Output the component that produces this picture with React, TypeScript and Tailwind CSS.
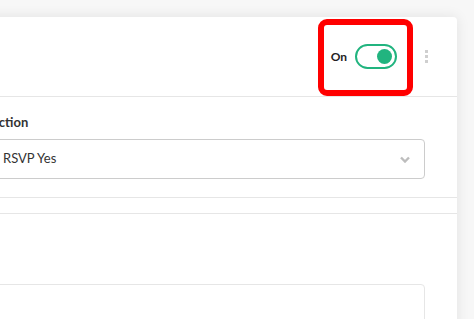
import React from "react";

export default function App() {
  return (
    <div className="min-h-[319px] h-[319px] overflow-hidden bg-[#f7f7f7] pt-[17px] pr-[17px] font-['Lato','Noto_Sans',sans-serif] relative">
      <div className="ml-[-34px] h-[400px] bg-white rounded-tr-[4px] shadow-[0_0_14px_rgba(0,0,0,0.09)]">
        {/* Header */}
        <div className="h-[80px] flex items-center justify-end pr-[29px] border-b border-[#e6e6e6]">
          <span className="text-[12px] font-bold text-[#222] mr-[8px]">On</span>
          <button
            type="button"
            className="w-[42px] h-[25px] rounded-full border-2 border-[#21b47f] bg-white flex items-center justify-end pr-[3px]"
          >
            <span className="w-[15px] h-[15px] rounded-full bg-[#21b47f]" />
          </button>
          <div className="ml-[28px] flex flex-col gap-[2px]">
            <span className="w-[3px] h-[3px] bg-[#cfcfcf]" />
            <span className="w-[3px] h-[3px] bg-[#cfcfcf]" />
            <span className="w-[3px] h-[3px] bg-[#cfcfcf]" />
          </div>
        </div>

        {/* Action */}
        <div className="pl-6 pr-[32px] pt-[16px] pb-[18px] border-b border-[#e6e6e6]">
          <label className="block text-[13px] font-bold text-[#333] leading-[18px] mb-[8px]">
            Action
          </label>
          <div className="h-[40px] border border-[#cccccc] rounded-[4px] flex items-center justify-between pl-[12px] pr-[14px]">
            <span className="text-[13px] text-[#333]">RSVP Yes</span>
            <svg width="10" height="7" viewBox="0 0 10 7">
              <path d="M1 1.5 L5 5.5 L9 1.5" stroke="#bdbdbd" strokeWidth="2.4" fill="none" />
            </svg>
          </div>
        </div>

        <div className="h-[16px] border-b border-[#e6e6e6]" />

        {/* Next section */}
        <div className="pl-6 pr-[32px] pt-[70px]">
          <div className="h-[80px] border border-[#e6e6e6] rounded-[4px]" />
        </div>
      </div>

      {/* annotation */}
      <div className="absolute left-[318px] top-[19px] w-[95px] h-[77px] border-[6px] border-[#ff0000] rounded-[9px]" />
    </div>
  );
}
